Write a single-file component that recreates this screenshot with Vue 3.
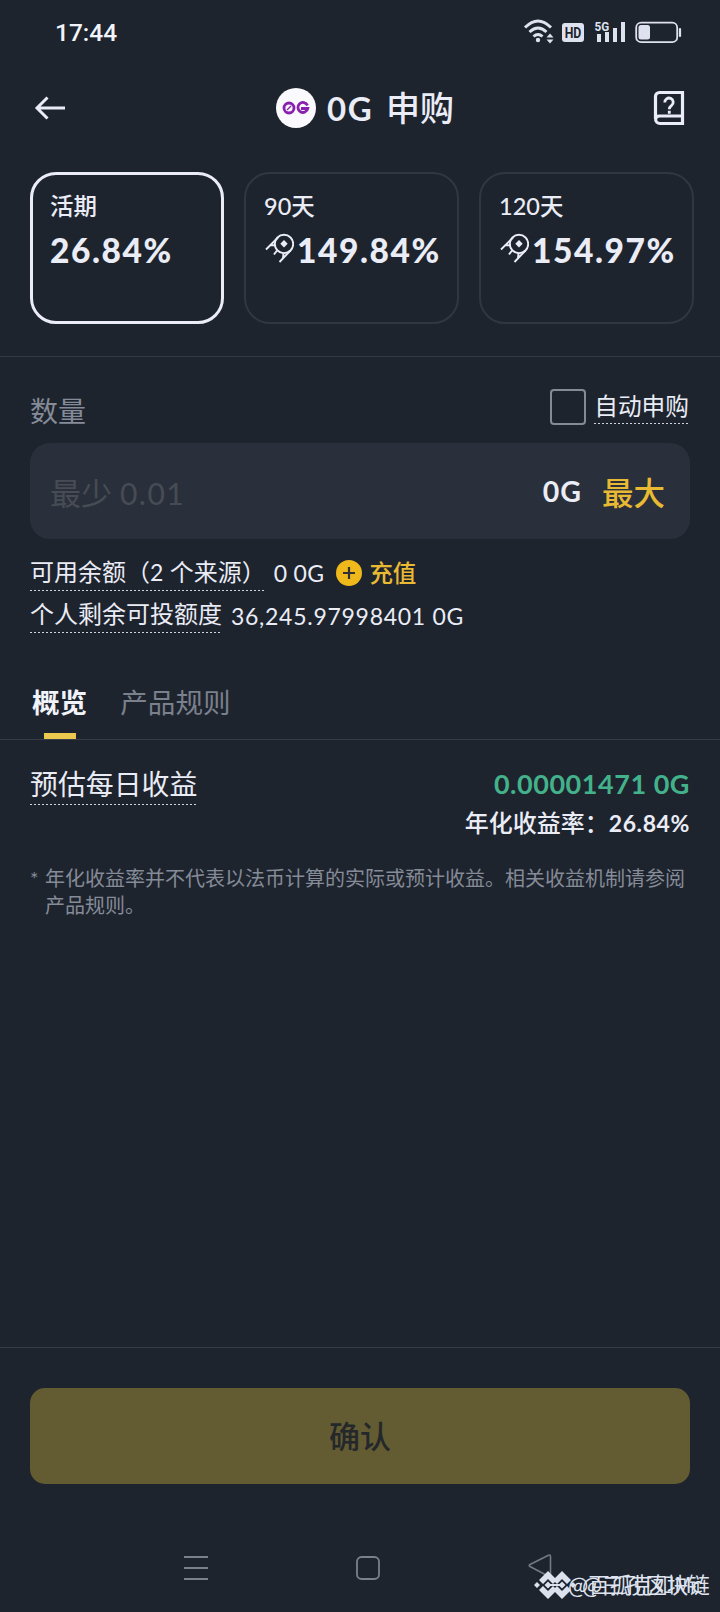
<script setup>
const plans = [
  { term: '活期', rate: '26.84%', active: true, boosted: false },
  { term: '90天', rate: '149.84%', active: false, boosted: true },
  { term: '120天', rate: '154.97%', active: false, boosted: true },
]
</script>

<template>
  <div class="screen">
    <header class="status">
      <span class="clock">17:44</span>
      <svg class="status-icons" width="160" height="28" viewBox="0 0 160 28" fill="none">
        <g stroke="#dde2ee" stroke-width="3">
          <path d="M2 9.500Q15-3.500 28 9.500" />
          <path d="M6.500 14Q15 6 23.500 14" />
          <path d="M10.500 18.500Q15 14.500 19.500 18.500" />
        </g>
        <circle cx="15" cy="22" r="2.200" fill="#dde2ee" />
        <path d="M23.500 19.500l3.500-4 3.500 4zM23.500 21.500l3.500 4 3.500-4z" fill="#dde2ee" />
        <rect x="39" y="5" width="22" height="19" rx="3" fill="#dde2ee" />
        <text transform="translate(50 20.200) scale(.82 1)" text-anchor="middle" class="hd">HD</text>
        <text transform="translate(71.500 12.500) scale(.9 1)" class="five">5G</text>
        <path d="M76 24v-8M84 24v-10M92 24v-14M100 24V4" stroke="#dde2ee" stroke-width="4" />
        <rect x="113.200" y="4.700" width="41" height="19.500" rx="5" stroke="#dde2ee" stroke-width="1.800" />
        <rect x="115.500" y="7" width="11.500" height="14.500" rx="2.500" fill="#dde2ee" />
        <path d="M157 11v7" stroke="#dde2ee" stroke-width="2.200" stroke-linecap="round" />
      </svg>
    </header>

    <nav class="topbar">
      <svg class="back" width="32" height="26" viewBox="0 0 32 26" fill="none" stroke="#eaecf6" stroke-width="3">
        <path d="M3 13h28M13.500 2.500L3 13l10.500 10.500" />
      </svg>
      <div class="title">
        <svg width="40" height="40" viewBox="0 0 40 40" fill="none">
          <circle cx="20" cy="20" r="20" fill="#f9f9fe" />
          <g stroke="#8a20ae" stroke-width="2.800">
            <circle cx="13" cy="20" r="5" />
            <path d="M31.500 17.500a5 5 0 1 0 .3 3H25" />
          </g>
          <path d="M11 22l4-4" stroke="#8a20ae" stroke-width="1.300" />
        </svg>
        <span class="title-latin">0G</span><span class="title-cjk">申购</span>
      </div>
      <svg class="guide" width="32" height="36" viewBox="0 0 32 36" fill="none" stroke="#eaecf6" stroke-width="3.200">
        <path d="M29.500 2.500H6.500a4 4 0 0 0-4 4V29a4.500 4.500 0 0 0 4.500 4.500h22.500zM2.500 29.500a4 4 0 0 1 4-3.500h23" />
        <path d="M11.800 12.500a4.200 4.200 0 1 1 6.800 3c-1.600 1.200-2.300 1.600-2.300 3.800M16.300 20.800v3" stroke-width="2.800" />
      </svg>
    </nav>

    <section class="plans">
      <article v-for="plan in plans" :key="plan.term" class="plan" :class="{ active: plan.active }">
        <div class="term">{{ plan.term }}</div>
        <div class="rate">
          <svg v-if="plan.boosted" width="29" height="30" viewBox="0 0 29 30" fill="none" stroke="#eaecf6" stroke-width="1.900">
            <circle cx="19" cy="11" r="9.200" />
            <path d="M1 16.500L13 4.500M25.500 17.500L14.500 29M5.500 12l5.500.500M12 17.500l-3 4M18.500 20l-.500 5" />
            <path d="M19 7l3.700 3.800L19 14.500l-3.700-3.700z" fill="#eaecf6" stroke="none" />
          </svg>
          <span>{{ plan.rate }}</span>
        </div>
      </article>
    </section>

    <section class="amount">
      <div class="amount-head">
        <span class="amount-label">数量</span>
        <label class="auto"><i class="box"></i><span class="auto-text dotted">自动申购</span></label>
      </div>
      <div class="field">
        <span class="placeholder">最少 <span class="latin">0.01</span></span>
        <span class="unit">0G</span>
        <span class="max">最大</span>
      </div>
      <div class="line">
        <span class="dotted avail">可用余额（<span class="latin">2</span> 个来源）</span>
        <span class="latin zero">0 0G</span>
        <svg class="plus" width="26" height="26" viewBox="0 0 26 26">
          <circle cx="13" cy="13" r="13" fill="#f0b91b" />
          <path d="M13 7v12M7 13h12" stroke="#303136" stroke-width="2.200" />
        </svg>
        <span class="deposit">充值</span>
      </div>
      <div class="line second">
        <span class="dotted">个人剩余可投额度</span>
        <span class="latin quota">36,245.97998401 0G</span>
      </div>
    </section>

    <div class="tabs">
      <span class="tab current">概览</span>
      <span class="tab">产品规则</span>
    </div>

    <section class="overview">
      <div class="earn">
        <span class="earn-label dotted">预估每日收益</span>
        <div class="earn-values">
          <div class="green">0.00001471 0G</div>
          <div class="apr">年化收益率：<span class="latin">26.84%</span></div>
        </div>
      </div>
      <div class="note">
        <span class="star">*</span>
        <p>年化收益率并不代表以法币计算的实际或预计收益。相关收益机制请参阅<br>产品规则。</p>
      </div>
    </section>

    <footer class="footer">
      <button class="confirm">确认</button>
      <div class="sysnav">
        <svg class="menu" width="24" height="26" viewBox="0 0 24 26" stroke="#7b808b" stroke-width="2">
          <path d="M0 2h24M0 13h24M0 24h24" />
        </svg>
        <svg class="home" width="24" height="24" viewBox="0 0 24 24" fill="none" stroke="#7b808b" stroke-width="1.800">
          <rect x="1" y="1" width="22" height="22" rx="4.500" />
        </svg>
        <svg class="prev" width="24" height="24" viewBox="0 0 24 24" fill="none" stroke="#747982" stroke-width="1.600" stroke-linejoin="round">
          <path d="M20.500 1.200L2 10.500q-1.500 1 0 2L20.500 22.200q2 .8 2-1.200V2.500q0-2-2-1.300z" />
        </svg>
      </div>
    </footer>

    <div class="mark">
      <svg width="42" height="30" viewBox="0 0 42 30" fill="#dce1ee">
        <path d="M14 1l7 7 7-7 9 9-4 4-5-5-5 5-2-2-2 2-5-5-5 5-4-4zM14 29l7-7 7 7 9-9-4-4-5 5-5-5-2 2-2-2-5 5-5-5-4 4zM3 12l3 3-3 3-3-3zM14 11.500l3.500 3.500-3.500 3.500-3.500-3.500zM28 11.500l3.500 3.500-3.500 3.500-3.500-3.500zM39 12l3 3-3 3-3-3zM14 14h14v2H14z" />
      </svg>
      <div class="mark-text">
        <span class="first">@百孤克如Mc</span>
        <span class="over">@三孔区块链</span>
      </div>
    </div>
  </div>
</template>

<style>
html, body { margin: 0; background: #1e242e; }
</style>

<style scoped>
.screen {
  position: relative;
  display: flex;
  flex-direction: column;
  width: 720px;
  height: 1612px;
  box-sizing: border-box;
  overflow: hidden;
  background: #1e242e;
  color: #eaecf6;
  font-family: Lato, "Noto Sans CJK SC", sans-serif;
  white-space: nowrap;
}
.status { height: 64px; display: flex; justify-content: space-between; box-sizing: border-box; padding: 18px 37px 0 55px; }
.clock { font: 500 24.500px/29px Roboto, sans-serif; color: #f2f4fa; }
.hd { font: 700 15px Roboto, sans-serif; fill: #1e242e; }
.five { font: 700 13px Roboto, sans-serif; fill: #dde2ee; }
.topbar { height: 88px; display: grid; grid-template-columns: 90px 1fr 90px; align-items: center; }
.back { margin-left: 34px; }
.guide { margin-left: 23px; }
.title { display: flex; align-items: center; margin-left: 186px; }
.title-latin { font-weight: 700; font-size: 33px; margin-left: 11px; width: 60px; letter-spacing: 1.500px; }
.title-cjk { font-weight: 500; font-size: 34px; line-height: 44px; margin-left: -1px; }
.plans { height: 205px; box-sizing: border-box; padding: 20px 26px 0 30px; display: flex; gap: 20px; border-bottom: 1px solid #343a44; }
.plan { width: 215px; height: 152px; box-sizing: border-box; border: 2px solid #303740; border-radius: 26px; padding: 18px 0 0 18px; }
.plan.active { width: 194px; border: 3px solid #eaecf6; padding: 17px 0 0 17px; }
.term { font-size: 23.500px; font-weight: 500; line-height: 28px; }
.rate { display: flex; align-items: center; height: 36px; margin-top: 12px; font-size: 33.500px; font-weight: 900; letter-spacing: 1.550px; }
.rate svg { margin: -4px 3px 0 1px; }
.amount { padding: 0 30px; }
.amount-head { height: 86px; display: flex; justify-content: space-between; }
.amount-label { font-size: 28px; line-height: 40px; color: #858b97; margin-top: 34px; }
.auto { display: flex; align-items: flex-start; margin-top: 32px; }
.box { width: 36px; height: 36px; box-sizing: border-box; border: 2px solid #858b93; border-radius: 4px; margin-right: 8px; }
.dotted { background: linear-gradient(90deg, #cfd3dd 50%, transparent 50%) left bottom / 4px 1.500px repeat-x; }
.auto-text { font-size: 23.700px; line-height: 34px; height: 35px; margin-right: 1px; }
.field { height: 96px; border-radius: 20px; background: #2a303b; display: flex; align-items: center; box-sizing: border-box; padding: 0 25px 0 20px; }
.placeholder { flex: 1; font-size: 31px; color: #474c54; }
.placeholder .latin { font-size: 30px; letter-spacing: 1.500px; }
.unit { font-size: 28.500px; font-weight: 700; letter-spacing: 1px; margin-right: 20px; }
.max { font-size: 31.500px; font-weight: 500; color: #e8b932; }
.line { display: flex; align-items: center; height: 42px; margin-top: 13px; font-size: 24px; }
.line.second { margin-top: 0; }
.line .dotted { line-height: 34px; height: 36px; }
.latin { font-size: 23px; letter-spacing: .3px; }
.zero { margin-left: 8px; }
.plus { margin-left: 12px; }
.deposit { margin-left: 7px; font-weight: 500; color: #e8b932; font-size: 23.500px; margin-top: -3px; }
.quota { margin-left: 9px; letter-spacing: .720px; margin-top: 1px; }
.tabs { display: flex; gap: 33px; margin-top: 46px; height: 57px; padding-left: 32px; border-bottom: 1px solid #373d48; }
.tab { position: relative; font-size: 27.600px; line-height: 41px; color: #7a808c; }
.tab.current { color: #f1f3fa; font-weight: 700; }
.tab.current::after { content: ""; position: absolute; left: 12px; top: 51px; width: 32px; height: 6px; background: #ebc94e; }
.overview { flex: 1; padding: 0 30px; }
.earn { display: flex; justify-content: space-between; align-items: flex-start; padding-top: 23px; }
.earn-label { font-size: 27.900px; line-height: 42px; height: 42px; }
.earn-values { text-align: right; }
.green { color: #43b28b; font-size: 27px; font-weight: 700; line-height: 42px; letter-spacing: .530px; }
.apr { font-size: 24px; font-weight: 500; line-height: 36px; }
.apr .latin { font-weight: 700; letter-spacing: .600px; }
.note { display: flex; margin-top: 24px; color: #858b97; font-size: 20px; line-height: 27px; }
.star { width: 15px; font-size: 20px; }
.note p { margin: 0; }
.footer { height: 265px; box-sizing: border-box; border-top: 1px solid #373d48; padding: 40px 30px 0; }
.confirm { display: block; width: 660px; height: 96px; padding: 0 0 3px; border: 0; border-radius: 15px; background: #635b32; color: #24282b; font: 500 31px "Noto Sans CJK SC", sans-serif; }
.sysnav { display: flex; align-items: center; height: 26px; margin-top: 71px; }
.menu { margin-left: 154px; }
.home { margin-left: 148px; }
.prev { margin-left: 148px; margin-top: -4px; }
.mark { position: absolute; left: 534px; top: 1570px; display: flex; align-items: center; height: 30px; color: #dfe3ef; }
.mark-text { display: grid; margin: -3px 0 0 -8px; font-family: "Noto Sans CJK SC", sans-serif; font-size: 21.500px; line-height: 30px; }
.mark-text span { grid-area: 1 / 1; }
.over { margin-left: 14px; }
</style>
